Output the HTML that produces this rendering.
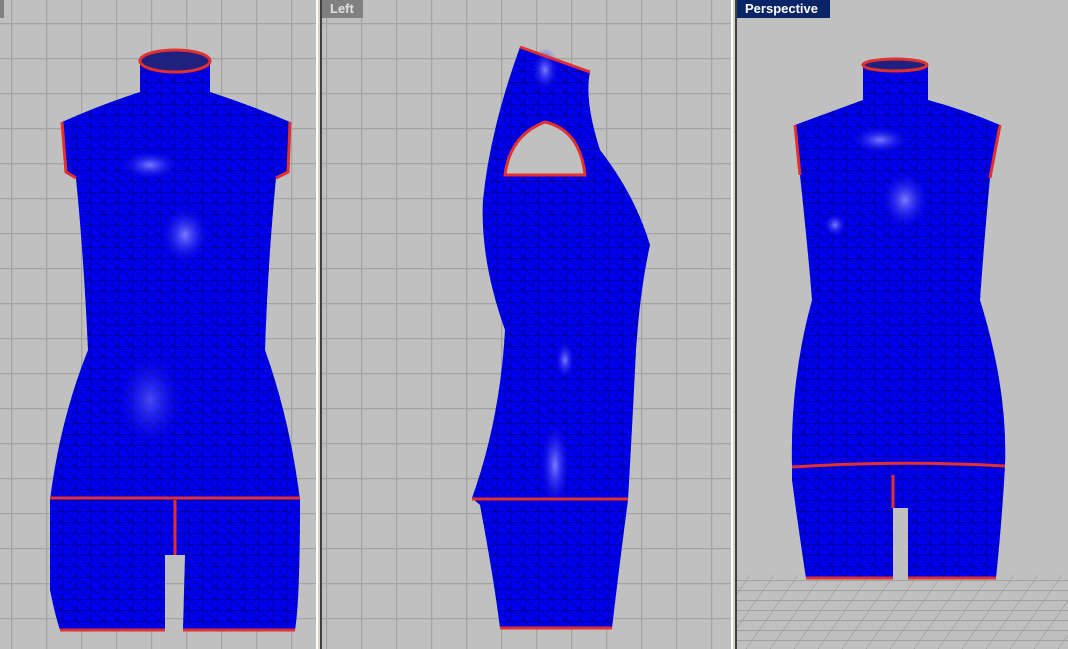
<!DOCTYPE html>
<html><head><style>
html,body{margin:0;padding:0;width:1068px;height:649px;overflow:hidden;background:#c0c0c0}
svg{display:block}
text{font-family:"Liberation Sans",sans-serif;font-weight:bold;font-size:13px}
</style></head><body>
<svg width="1068" height="649" viewBox="0 0 1068 649">
<defs>
<pattern id="g" x="-24" y="-12" width="35" height="35" patternUnits="userSpaceOnUse">
<path d="M0 0.5H35M0.5 0V35" stroke="#a4a4a4" stroke-width="1.5" fill="none"/>
</pattern>
<pattern id="g2" x="11" y="-12" width="35" height="35" patternUnits="userSpaceOnUse">
<path d="M0 0.5H35M0.5 0V35" stroke="#a4a4a4" stroke-width="1.5" fill="none"/>
</pattern>
<radialGradient id="hl" cx="0.5" cy="0.5" r="0.5"><stop offset="0" stop-color="#7a7aff"/><stop offset="1" stop-color="#0000f0" stop-opacity="0"/></radialGradient>
<pattern id="fl" width="24" height="10" patternUnits="userSpaceOnUse" patternTransform="skewX(-35)">
<path d="M0 0.5H24M0.5 0V10" stroke="#a0a0a0" fill="none"/>
</pattern>
<pattern id="mesh" width="14" height="11" patternUnits="userSpaceOnUse">
<path d="M0 0L14 11M0 11L7 0M0 5.5H14M7 0V11" stroke="#000030" stroke-width="0.7" fill="none" opacity="0.45"/>
</pattern>
<path id="b1" d="M140 60 L140 92 Q100 105 62 122 L66 172 L76 178 Q84 260 88 350 Q60 420 50 500 L50 590 Q55 615 60 630 L165 630 L165 555 L185 555 L183 630 L295 630 Q300 600 300 500 Q290 420 265 350 Q268 260 276 178 L288 172 L290 122 Q250 105 210 92 L210 60 Z"/>
<path id="b2" d="M520 47 L590 72 Q584 100 600 150 Q635 195 650 245 Q640 290 636 350 Q632 430 628 500 Q620 560 612 628 L500 628 Q494 580 480 505 L472 498 Q500 420 505 330 Q480 260 483 200 Q490 130 520 47 Z"/>
<path id="b3" d="M863 66 L863 100 Q830 112 795 125 L800 175 Q808 250 812 300 Q790 380 792 466 L792 480 Q800 540 806 578 L893 578 L893 508 L908 508 L908 578 L996 578 Q1002 520 1005 466 Q1008 390 980 300 Q985 230 990 178 L1000 125 Q965 110 928 100 L928 66 Z"/>
</defs>
<rect x="0" y="0" width="316" height="649" fill="url(#g)"/>
<rect x="322" y="0" width="409" height="649" fill="url(#g2)"/>
<rect x="737" y="0" width="331" height="649" fill="#c0c0c0"/>
<rect x="737" y="575" width="331" height="74" fill="url(#fl)"/>
<rect x="316" y="0" width="2" height="649" fill="#fff"/><rect x="318" y="0" width="2" height="649" fill="#d8d4cc"/><rect x="320" y="0" width="2" height="649" fill="#404040"/>
<rect x="731" y="0" width="2" height="649" fill="#fff"/><rect x="733" y="0" width="2" height="649" fill="#d8d4cc"/><rect x="735" y="0" width="2" height="649" fill="#404040"/>
<rect x="0" y="0" width="4" height="18" fill="#808080"/>
<rect x="322" y="0" width="41" height="18" fill="#808080"/><text x="330" y="13" fill="#e0e0e0">Left</text>
<rect x="737" y="0" width="93" height="18" fill="#0a2468"/><text x="745" y="13" fill="#fff">Perspective</text>

<!-- front body -->
<use href="#b1" fill="#0000f0"/>
<use href="#b1" fill="url(#mesh)"/>
<ellipse cx="150" cy="165" rx="30" ry="15" fill="url(#hl)"/>
<ellipse cx="185" cy="235" rx="25" ry="30" fill="url(#hl)"/>
<ellipse cx="150" cy="400" rx="35" ry="50" fill="url(#hl)" opacity=".6"/>
<ellipse cx="175" cy="61" rx="35" ry="11" fill="#202080" stroke="#e03030" stroke-width="3"/>
<path d="M62 122 L66 172 L76 178 M290 122 L288 172 L276 178" stroke="#e03030" stroke-width="3" fill="none"/>
<path d="M50 498 H300 M175 500 V555 M60 630 H165 M183 630 H295" stroke="#e03030" stroke-width="3" fill="none"/>

<!-- side body -->
<use href="#b2" fill="#0000f0"/>
<use href="#b2" fill="url(#mesh)"/>
<ellipse cx="555" cy="465" rx="15" ry="45" fill="url(#hl)"/>
<ellipse cx="565" cy="360" rx="10" ry="20" fill="url(#hl)"/>
<ellipse cx="545" cy="70" rx="14" ry="22" fill="url(#hl)"/>
<path d="M520 47 L590 72" stroke="#e03030" stroke-width="3"/>
<path d="M505 175 Q510 135 545 122 Q580 130 585 175 Z" fill="#c0c0c0" stroke="#e03030" stroke-width="3"/>
<path d="M472 499 H628 M500 628 H612" stroke="#e03030" stroke-width="3"/>

<!-- perspective body -->
<use href="#b3" fill="#0000f0"/>
<use href="#b3" fill="url(#mesh)"/>
<ellipse cx="905" cy="200" rx="25" ry="30" fill="url(#hl)"/>
<ellipse cx="880" cy="140" rx="30" ry="14" fill="url(#hl)"/>
<ellipse cx="835" cy="225" rx="12" ry="12" fill="url(#hl)"/>
<ellipse cx="895" cy="65" rx="32" ry="6" fill="#202080" stroke="#e03030" stroke-width="3"/>
<path d="M795 125 L800 175 M1000 125 L990 178" stroke="#e03030" stroke-width="3" fill="none"/>
<path d="M792 467 Q900 460 1005 466 M893 475 V508 M806 578 H893 M908 578 H996" stroke="#e03030" stroke-width="3" fill="none"/>
</svg>
</body></html>
